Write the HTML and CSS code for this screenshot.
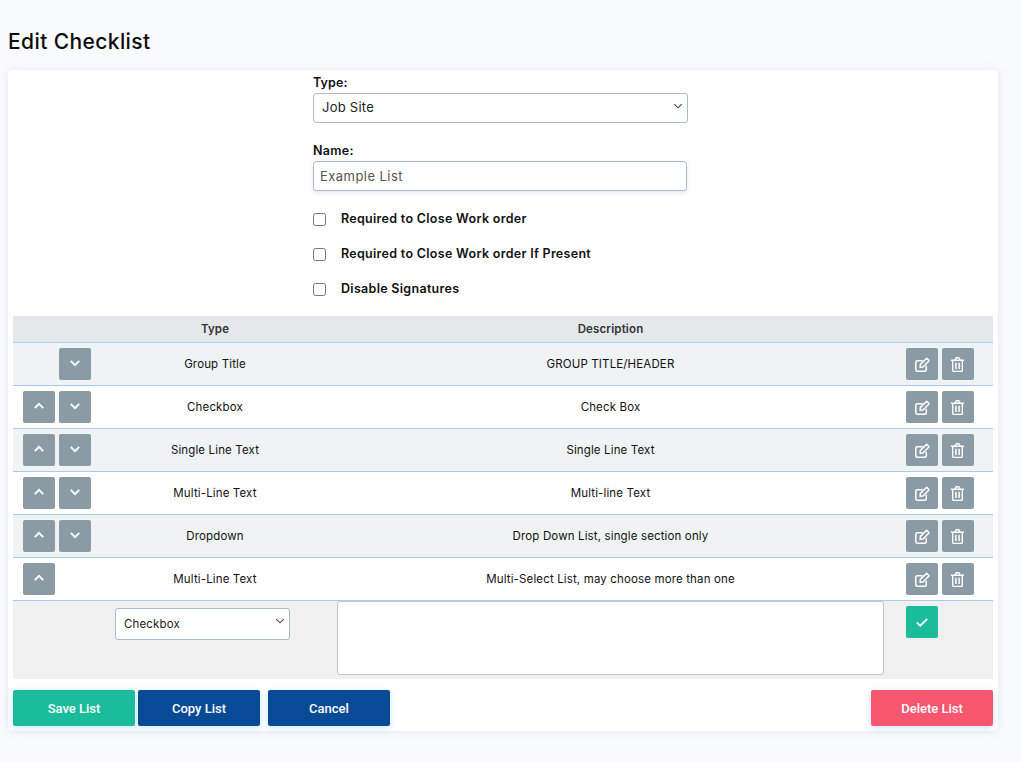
FILE: index.html
```html
<!DOCTYPE html>
<html lang="en">
<head>
<meta charset="utf-8">
<title>Edit Checklist</title>
<link rel="stylesheet" href="styles.css">
</head>
<body>
<svg class="defs" aria-hidden="true">
  <symbol id="i-up" viewBox="0 0 12 12"><path d="M1.800 8.100 6 3.900l4.200 4.200" fill="none" stroke="currentColor" stroke-width="1.900"/></symbol>
  <symbol id="i-down" viewBox="0 0 12 12"><path d="M1.800 3.900 6 8.100l4.200-4.200" fill="none" stroke="currentColor" stroke-width="1.900"/></symbol>
  <symbol id="i-check" viewBox="0 0 14 14"><path d="M1.800 7.300l3.400 3.400L12.200 3.800" fill="none" stroke="currentColor" stroke-width="1.700"/></symbol>
  <symbol id="i-caret" viewBox="0 0 12 12"><path d="M1.500 3.700 6 8.200l4.500-4.500" fill="none" stroke="currentColor" stroke-width="1.300"/></symbol>
  <symbol id="i-edit" viewBox="0 0 15 15"><path d="M11.300 8.800v3.900c0 .9-.6 1.500-1.500 1.500H2.300c-.9 0-1.500-.6-1.500-1.500V5.200c0-.9.6-1.500 1.500-1.500h5.400" fill="none" stroke="currentColor" stroke-width="1.500"/><path d="M11.700 1.300l2 2c.3.300.3.600 0 .9L8 10l-2.900.3L5.400 7.400z" fill="none" stroke="currentColor" stroke-width="1.500" stroke-linejoin="round"/></symbol>
  <symbol id="i-trash" viewBox="0 0 13 15"><path d="M0 3.200h13M1.700 3.200v10c0 .8.500 1.200 1.200 1.200h7.200c.7 0 1.200-.4 1.200-1.200v-10M3.900 3.200l.9-2c.1-.3.300-.5.600-.5h2.200c.3 0 .5.200.6.500l.9 2" fill="none" stroke="currentColor" stroke-width="1.400"/><path d="M4.900 5.700v6.200M8.100 5.700v6.200" fill="none" stroke="currentColor" stroke-width="1.500"/></symbol>
</svg>

<h1 class="page-title">Edit Checklist</h1>

<main class="card">
  <form class="details">
    <label class="field-label">Type:</label>
    <div class="select-wrap select-type">
      <select class="control"><option>Job Site</option></select>
      <svg class="caret"><use href="#i-caret"/></svg>
    </div>
    <label class="field-label name-label">Name:</label>
    <input class="control name-input" type="text" value="Example List">
    <label class="check-row first"><input type="checkbox"><span>Required to Close Work order</span></label>
    <label class="check-row"><input type="checkbox"><span>Required to Close Work order If Present</span></label>
    <label class="check-row"><input type="checkbox"><span>Disable Signatures</span></label>
  </form>

  <section class="table">
    <div class="row head">
      <div></div><div class="cell">Type</div><div class="cell">Description</div><div></div>
    </div>
    <div class="row alt">
      <div class="moves"><span class="slot"></span><button class="icon-btn" type="button"><svg class="ico-s"><use href="#i-down"/></svg></button></div>
      <div class="cell">Group Title</div><div class="cell">GROUP TITLE/HEADER</div>
      <div class="actions"><button class="icon-btn" type="button"><svg class="ico-e"><use href="#i-edit"/></svg></button><button class="icon-btn" type="button"><svg class="ico-t"><use href="#i-trash"/></svg></button></div>
    </div>
    <div class="row">
      <div class="moves"><button class="icon-btn" type="button"><svg class="ico-s"><use href="#i-up"/></svg></button><button class="icon-btn" type="button"><svg class="ico-s"><use href="#i-down"/></svg></button></div>
      <div class="cell">Checkbox</div><div class="cell">Check Box</div>
      <div class="actions"><button class="icon-btn" type="button"><svg class="ico-e"><use href="#i-edit"/></svg></button><button class="icon-btn" type="button"><svg class="ico-t"><use href="#i-trash"/></svg></button></div>
    </div>
    <div class="row alt">
      <div class="moves"><button class="icon-btn" type="button"><svg class="ico-s"><use href="#i-up"/></svg></button><button class="icon-btn" type="button"><svg class="ico-s"><use href="#i-down"/></svg></button></div>
      <div class="cell">Single Line Text</div><div class="cell">Single Line Text</div>
      <div class="actions"><button class="icon-btn" type="button"><svg class="ico-e"><use href="#i-edit"/></svg></button><button class="icon-btn" type="button"><svg class="ico-t"><use href="#i-trash"/></svg></button></div>
    </div>
    <div class="row">
      <div class="moves"><button class="icon-btn" type="button"><svg class="ico-s"><use href="#i-up"/></svg></button><button class="icon-btn" type="button"><svg class="ico-s"><use href="#i-down"/></svg></button></div>
      <div class="cell">Multi-Line Text</div><div class="cell">Multi-line Text</div>
      <div class="actions"><button class="icon-btn" type="button"><svg class="ico-e"><use href="#i-edit"/></svg></button><button class="icon-btn" type="button"><svg class="ico-t"><use href="#i-trash"/></svg></button></div>
    </div>
    <div class="row alt">
      <div class="moves"><button class="icon-btn" type="button"><svg class="ico-s"><use href="#i-up"/></svg></button><button class="icon-btn" type="button"><svg class="ico-s"><use href="#i-down"/></svg></button></div>
      <div class="cell">Dropdown</div><div class="cell">Drop Down List, single section only</div>
      <div class="actions"><button class="icon-btn" type="button"><svg class="ico-e"><use href="#i-edit"/></svg></button><button class="icon-btn" type="button"><svg class="ico-t"><use href="#i-trash"/></svg></button></div>
    </div>
    <div class="row">
      <div class="moves"><button class="icon-btn" type="button"><svg class="ico-s"><use href="#i-up"/></svg></button></div>
      <div class="cell">Multi-Line Text</div><div class="cell">Multi-Select List, may choose more than one</div>
      <div class="actions"><button class="icon-btn" type="button"><svg class="ico-e"><use href="#i-edit"/></svg></button><button class="icon-btn" type="button"><svg class="ico-t"><use href="#i-trash"/></svg></button></div>
    </div>
    <div class="row editor">
      <div></div>
      <div class="select-wrap select-new">
        <select class="control small"><option>Checkbox</option></select>
        <svg class="caret"><use href="#i-caret"/></svg>
      </div>
      <div class="text-cell"><textarea class="notes"></textarea></div>
      <div class="confirm"><button class="icon-btn ok" type="button"><svg class="ico-c"><use href="#i-check"/></svg></button></div>
    </div>
  </section>

  <footer class="footer">
    <button class="btn teal" type="button">Save List</button>
    <button class="btn navy" type="button">Copy List</button>
    <button class="btn navy cancel" type="button">Cancel</button>
    <button class="btn red" type="button">Delete List</button>
  </footer>
</main>
</body>
</html>
```

FILE: styles.css
```css
* { box-sizing: border-box; }

html, body { margin: 0; }

body {
  height: 762px;
  overflow: hidden;
  padding: 0 23px 0 8px;
  background: #f9fafc;
  color: #111;
  font-family: "Inter", "Liberation Sans", sans-serif;
  font-size: 11.500px;
  letter-spacing: 0.14px;
}

.defs { display: none; }

.page-title {
  margin: 0;
  padding-top: 29px;
  height: 70px;
  font-size: 21px;
  line-height: 26px;
  font-weight: 500;
  letter-spacing: 0.4px;
  color: #0c0c0c;
}

.card {
  height: 661px;
  padding: 5px 5px 0;
  background: #fff;
  border-radius: 5px;
  box-shadow: 0 0 8px rgba(130, 150, 190, 0.18);
}

.details {
  width: 375px;
  height: 241px;
  margin-left: 300px;
  display: flex;
  flex-direction: column;
  align-items: flex-start;
}

.field-label {
  display: block;
  height: 18px;
  font-size: 12.500px;
  line-height: 16px;
  font-weight: 600;
  color: #111;
}

.name-label { margin-top: 20px; letter-spacing: 0.3px; }

.select-wrap { position: relative; }

.select-type { width: 375px; height: 30px; }

.select-new { width: 175px; height: 32px; margin-top: 7px; }

.control {
  display: block;
  width: 100%;
  height: 100%;
  margin: 0;
  padding: 0 8px 1px;
  appearance: none;
  background: #fff;
  border: 1px solid #aebcc9;
  border-radius: 3px;
  color: #222;
  font: 400 13px/1 "Inter", "Liberation Sans", sans-serif;
  letter-spacing: 0.25px;
  outline: none;
}

.control.small {
  padding: 2px 8px 0;
  font-size: 11.500px;
  letter-spacing: 0.15px;
}

.name-input {
  width: 374px;
  height: 30px;
  padding: 0 6px;
  color: #555;
  letter-spacing: 0.45px;
  box-shadow: 0 2px 5px rgba(120, 150, 190, 0.2);
}

.caret {
  position: absolute;
  top: 8px;
  right: 5px;
  width: 10px;
  height: 10px;
  color: #444;
  pointer-events: none;
}

.check-row {
  display: flex;
  align-items: center;
  gap: 15px;
  height: 35px;
  font-size: 12.500px;
  font-weight: 600;
  letter-spacing: 0.3px;
  color: #111;
}

.check-row.first { margin-top: 10px; }

.check-row input {
  width: 13px;
  height: 13px;
  margin: 1px 0 0;
}

.row {
  display: grid;
  grid-template-columns: 102px 200px 591px 87px;
  height: 43px;
  align-items: center;
  border-bottom: 1px solid #a9c9ef;
  text-align: center;
}

.row.alt { background: #eff3f4; }

.row.head {
  height: 27px;
  background: #e5e8eb;
  font-weight: 600;
  color: #333;
}

.moves {
  display: flex;
  gap: 4px;
  padding-left: 10px;
}

.slot { width: 32px; }

.actions {
  display: flex;
  gap: 4px;
}

.icon-btn {
  display: flex;
  align-items: center;
  justify-content: center;
  width: 32px;
  height: 32px;
  padding: 0;
  border: 0;
  border-radius: 2px;
  background: #8a9ba5;
  color: #fff;
}

.icon-btn.ok { background: #1abc9c; }

.ico-s { width: 12px; height: 12px; margin-top: -2px; }
.ico-e { width: 15px; height: 15px; }
.ico-t { width: 13px; height: 15px; margin-left: -1px; }
.ico-c { width: 14px; height: 14px; }

.row.editor {
  height: 78px;
  align-items: start;
  border-bottom: 0;
  background: #f0f0f0;
}

.text-cell { padding-left: 22px; text-align: left; }

.notes {
  display: block;
  width: 547px;
  height: 74px;
  margin: 0;
  border: 1px solid #c6c6c6;
  border-radius: 3px;
  background: #fff;
  resize: none;
}

.confirm { padding-top: 5px; }

.footer {
  display: flex;
  margin-top: 11px;
}

.btn {
  width: 122px;
  height: 36px;
  padding: 0;
  border: 0;
  border-radius: 2px;
  color: #fff;
  font: 500 13px/35px "Roboto", "Liberation Sans", sans-serif;
  box-shadow: 0 2px 7px rgba(90, 180, 240, 0.3);
}

.teal { background: #1abc9c; }
.navy { background: #094a97; margin-left: 3px; }
.cancel { margin-left: 8px; }
.red { background: #f7566f; margin-left: auto; }
```
